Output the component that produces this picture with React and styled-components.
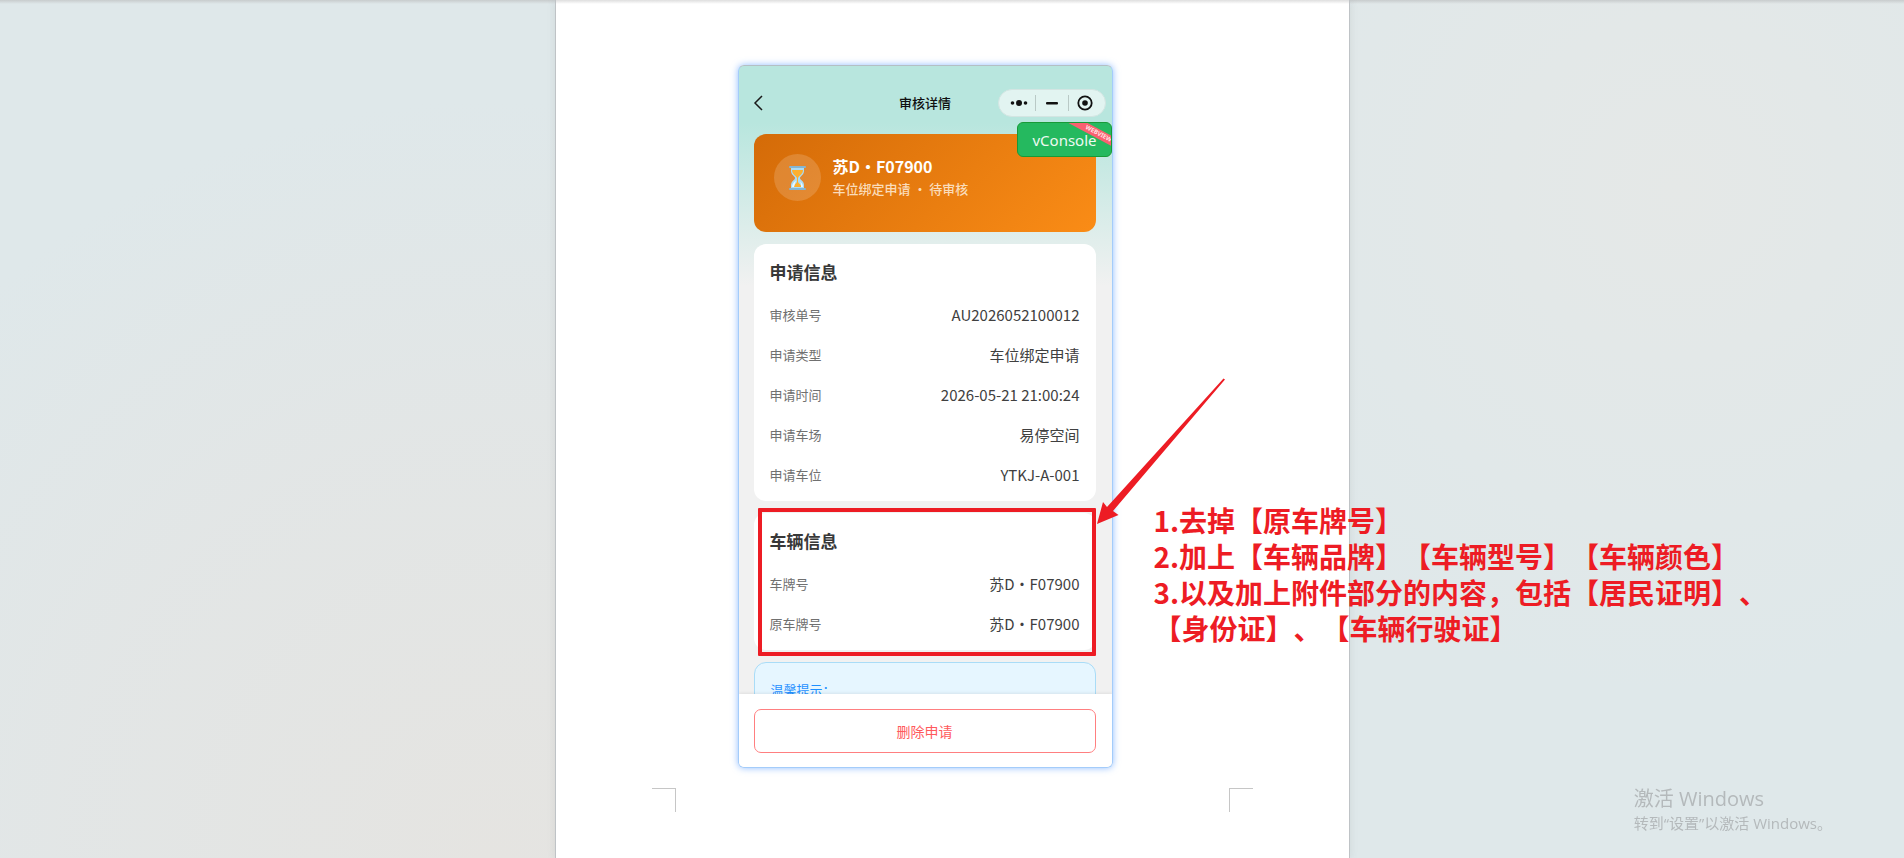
import React from 'react';
import styled, { createGlobalStyle } from 'styled-components';

const GlobalStyle = createGlobalStyle`
    * {
        box-sizing: border-box;
    }

    body {
        margin: 0;
        overflow: hidden;
        font-family: 'Noto Sans CJK SC', sans-serif;
        text-spacing-trim: space-all;
    }
`

//Desk and paper:

const Desk = styled.div`
    display: flex;
    justify-content: center;
    min-height: 100vh;
    background:
        linear-gradient(to bottom, #c8cccd, rgba(225, 231, 233, 0) 4px),
        radial-gradient(circle at 26% 100%, #e5e4e1 0, rgba(228, 229, 228, 0.7) 26%, rgba(228, 229, 229, 0) 46%),
        radial-gradient(circle at 88% 22%, #e5e8e7 0, rgba(228, 232, 232, 0) 28%),
        #dfe8ea;
`

const Paper = styled.main`
    width: 100%;
    max-width: 795px;
    min-height: 100vh;
    padding: 65px 120px 0;
    background: linear-gradient(to bottom, #dedede, white 4px);
    border-left: 1px solid #bfc3c6;
    border-right: 1px solid #bfc3c6;
    box-shadow: 0 0 8px rgba(90, 100, 110, 0.12);
`

const Figure = styled.div`
    position: relative;
    width: 375px;
    margin-left: 62px;
`

const CropMarks = styled.div`
    display: flex;
    justify-content: space-between;
    margin: 20px -24px 0;
`

const CropMark = styled.span`
    width: 24px;
    height: 24px;
    border-top: 1px solid #c6c6c6;
    border-left: ${props => props.$side === 'right' ? '1px solid #c6c6c6' : 'none'};
    border-right: ${props => props.$side === 'left' ? '1px solid #c6c6c6' : 'none'};
`

//Phone:

const Phone = styled.section`
    position: relative;
    display: flex;
    flex-direction: column;
    height: 703px;
    overflow: hidden;
    border: 1px solid #a4ccfa;
    border-top-color: #b4bfc4;
    border-radius: 6px;
    background: linear-gradient(to bottom, #b8e6de 56px, #f1f1f1 220px);
    box-shadow: 0 0 7px rgba(70, 145, 255, 0.6);
`

const PhoneHeader = styled.header`
    display: grid;
    grid-template-columns: 1fr auto 1fr;
    align-items: center;
    flex: none;
    height: 68px;
    padding: 6px 6px 0;
`

const BackButton = styled.button`
    display: flex;
    width: 12px;
    margin-left: 8px;
    padding: 0;
    border: none;
    background: none;
`

const PhoneTitle = styled.h1`
    margin: 0;
    font-size: 13px;
    font-weight: 500;
    line-height: 20px;
    color: #111;
`

const Capsule = styled.div`
    display: flex;
    justify-self: end;
    align-items: center;
    width: 108px;
    height: 28px;
    border: 1px solid #d3e5e2;
    border-radius: 14px;
    background-color: #e2f4f1;
`

const CapsuleButton = styled.button`
    display: flex;
    flex: 1;
    justify-content: center;
    align-items: center;
    height: 16px;
    padding: 0;
    border: none;
    background: none;

    & + & {
        border-left: 1px solid #b9c9c6;
    }

    &:first-child {
        padding-left: 4px;
    }

    &:last-child {
        padding-right: 4px;
    }
`

const Content = styled.div`
    display: flex;
    flex: 1;
    flex-direction: column;
    gap: 12px;
    min-height: 0;
    padding: 0 16px 0 15px;
    overflow: hidden;
`

const StatusCard = styled.div`
    display: flex;
    flex: none;
    gap: 12px;
    height: 98px;
    padding: 20px;
    border-radius: 12px;
    background: linear-gradient(135deg, #d46b08, #fa8c16);
`

const StatusIcon = styled.div`
    display: flex;
    justify-content: center;
    align-items: center;
    width: 47px;
    height: 47px;
    border-radius: 50%;
    background-color: rgba(255, 255, 255, 0.16);
`

const PlateTitle = styled.h2`
    margin: 0;
    font-size: 16px;
    font-weight: 700;
    line-height: 24px;
    color: white;
`

const StatusText = styled.p`
    margin: 0;
    font-size: 13px;
    font-weight: 500;
    line-height: 22px;
    color: #fadcba;
    white-space: nowrap;
`

const Card = styled.section`
    flex: none;
    padding: 16px 16px 7px;
    border-radius: 12px;
    background-color: white;
`

const CardTitle = styled.h2`
    margin: 0 0 10px;
    font-size: 17px;
    font-weight: 700;
    line-height: 24px;
    color: #383838;
`

const InfoList = styled.dl`
    margin: 0;
`

const InfoRow = styled.div`
    display: flex;
    justify-content: space-between;
    align-items: center;
    height: 40px;
`

const InfoLabel = styled.dt`
    font-size: 13px;
    color: #707070;
`

const InfoValue = styled.dd`
    margin: 0;
    font-size: 15px;
    color: #404040;
`

const TipCard = styled.section`
    flex: none;
    height: 120px;
    padding: 15px 16px;
    border: 1px solid #a9dcf7;
    border-radius: 12px;
    background-color: #e6f6ff;
    font-size: 13px;
    line-height: 24px;
    color: #1e90ff;
`

const ActionBar = styled.footer`
    display: flex;
    flex: none;
    padding: 15px 16px 14px 15px;
    background-color: white;
    box-shadow: 0 -1px 3px rgba(0, 0, 0, 0.08);
`

const DeleteButton = styled.button`
    flex: 1;
    height: 44px;
    padding: 0;
    border: 1px solid #ff7f80;
    border-radius: 7px;
    background-color: white;
    font-family: inherit;
    font-size: 14px;
    color: #ff5a5c;
`

//Things that float over the phone:

const ConsoleButton = styled.button`
    position: absolute;
    top: 57px;
    right: 1px;
    width: 95px;
    height: 35px;
    padding: 0 0 0 1px;
    overflow: hidden;
    border: 1px solid #189a37;
    border-radius: 6px;
    background-color: #25b95f;
    font-family: 'Noto Sans', sans-serif;
    font-size: 15px;
    color: #eefaf2;
`

const Ribbon = styled.span`
    position: absolute;
    top: 4px;
    right: -15px;
    width: 64px;
    height: 9px;
    padding-left: 10px;
    background-color: #fa6070;
    font-size: 6px;
    font-weight: 700;
    line-height: 9px;
    text-align: center;
    color: #ffe3e6;
    transform: rotate(28deg);
`

const Highlight = styled.div`
    position: absolute;
    top: 443px;
    left: 20px;
    right: 17px;
    height: 148px;
    border: 4px solid #ed1c24;
    border-radius: 1px;
`

const Arrow = styled.svg`
    position: absolute;
    top: 313px;
    left: 359px;
`

const Notes = styled.p`
    position: absolute;
    top: 437px;
    left: 416px;
    margin: 0;
    font-size: 28px;
    font-weight: 700;
    line-height: 36px;
    color: #ed1c24;
    white-space: pre;
`

const Watermark = styled.aside`
    position: fixed;
    right: 72px;
    bottom: 24px;
    font-family: 'Open Sans', 'Noto Sans CJK SC', sans-serif;
    color: #b4b9bb;
    white-space: nowrap;
`

const WatermarkTitle = styled.p`
    margin: 0;
    font-size: 20px;
    line-height: 26px;
`

const WatermarkText = styled.p`
    margin: 0;
    font-size: 15px;
    line-height: 22px;
`

const applyInfo = [
    { label: '审核单号', value: 'AU2026052100012' },
    { label: '申请类型', value: '车位绑定申请' },
    { label: '申请时间', value: '2026-05-21 21:00:24' },
    { label: '申请车场', value: '易停空间' },
    { label: '申请车位', value: 'YTKJ-A-001' },
];

const carInfo = [
    { label: '车牌号', value: '苏D・F07900' },
    { label: '原车牌号', value: '苏D・F07900' },
];

const notes = [
    '1.去掉【原车牌号】',
    '2.加上【车辆品牌】【车辆型号】【车辆颜色】',
    '3.以及加上附件部分的内容，包括【居民证明】、',
    '【身份证】、【车辆行驶证】',
];

const Hourglass = () => (
    <svg width="17" height="24" viewBox="0 0 17 24">
        <path d="M2 2h13v3c0 4-4 5-4 7s4 3 4 7v3H2v-3c0-4 4-5 4-7S2 9 2 5z" fill="#a9dcf7" />
        <path d="M3 4h11c0 4.500-4 5.500-4.500 7.500h-2C7 9.500 3 8.500 3 4z" fill="#fdb02f" />
        <path d="M8 11h1v5c1 2 3 2.500 3.500 5h-8C5 18.500 7 18 8 16z" fill="#fdb02f" />
        <path d="M3 21c0-3 2-5 4-6.500L5 21zM14 21c0-2-1-4-3-5.500 1 2 1 3 1 5.500z" fill="#e9f8ff" />
        <rect width="17" height="2" rx="1" fill="#86b5d1" />
        <rect y="22" width="17" height="2" rx="1" fill="#86b5d1" />
    </svg>
)

const InfoCard = ({ title, rows }) => {
    return (
        <Card>
            <CardTitle>{title}</CardTitle>
            <InfoList>
                {rows.map(row => (
                    <InfoRow key={row.label}>
                        <InfoLabel>{row.label}</InfoLabel>
                        <InfoValue>{row.value}</InfoValue>
                    </InfoRow>
                ))}
            </InfoList>
        </Card>
    )
}

//Render:

const App = () => {
    return (
        <>
            <GlobalStyle />
            <Desk>
                <Paper>
                    <Figure>
                        <Phone>
                            <PhoneHeader>
                                <BackButton aria-label="返回">
                                    <svg width="12" height="16" viewBox="0 0 12 16">
                                        <path d="M9 1L2 8l7 7" fill="none" stroke="#1a1a1a" strokeWidth="1.500" />
                                    </svg>
                                </BackButton>
                                <PhoneTitle>审核详情</PhoneTitle>
                                <Capsule>
                                    <CapsuleButton aria-label="更多">
                                        <svg width="18" height="8" viewBox="0 0 18 8">
                                            <circle cx="2.500" cy="4" r="1.800" fill="#111" />
                                            <circle cx="9" cy="4" r="3" fill="#111" />
                                            <circle cx="15.500" cy="4" r="1.800" fill="#111" />
                                        </svg>
                                    </CapsuleButton>
                                    <CapsuleButton aria-label="最小化">
                                        <svg width="14" height="4" viewBox="0 0 14 4">
                                            <rect x="1" y="1" width="12" height="2.500" rx="1" fill="#111" />
                                        </svg>
                                    </CapsuleButton>
                                    <CapsuleButton aria-label="关闭">
                                        <svg width="16" height="16" viewBox="0 0 16 16">
                                            <circle cx="8" cy="8" r="6.700" fill="none" stroke="#111" strokeWidth="1.800" />
                                            <circle cx="8" cy="8" r="2.800" fill="#111" />
                                        </svg>
                                    </CapsuleButton>
                                </Capsule>
                            </PhoneHeader>
                            <Content>
                                <StatusCard>
                                    <StatusIcon>
                                        <Hourglass />
                                    </StatusIcon>
                                    <div>
                                        <PlateTitle>苏D・F07900</PlateTitle>
                                        <StatusText>车位绑定申请 · 待审核</StatusText>
                                    </div>
                                </StatusCard>
                                <InfoCard title="申请信息" rows={applyInfo} />
                                <InfoCard title="车辆信息" rows={carInfo} />
                                <TipCard>温馨提示：</TipCard>
                            </Content>
                            <ActionBar>
                                <DeleteButton>删除申请</DeleteButton>
                            </ActionBar>
                        </Phone>
                        <ConsoleButton>
                            vConsole
                            <Ribbon>WEBVIEW</Ribbon>
                        </ConsoleButton>
                        <Highlight />
                        <Arrow width="130" height="148" viewBox="0 0 130 148">
                            <path d="M0 146L6 124l4 5L126.500 0.500l1.500 1L16 133l5.500 4z" fill="#ed1c24" />
                        </Arrow>
                        <Notes>{notes.join('\n')}</Notes>
                    </Figure>
                    <CropMarks>
                        <CropMark $side="left" />
                        <CropMark $side="right" />
                    </CropMarks>
                </Paper>
            </Desk>
            <Watermark>
                <WatermarkTitle>激活 Windows</WatermarkTitle>
                <WatermarkText>转到“设置”以激活 Windows。</WatermarkText>
            </Watermark>
        </>
    )
}

export default App;
